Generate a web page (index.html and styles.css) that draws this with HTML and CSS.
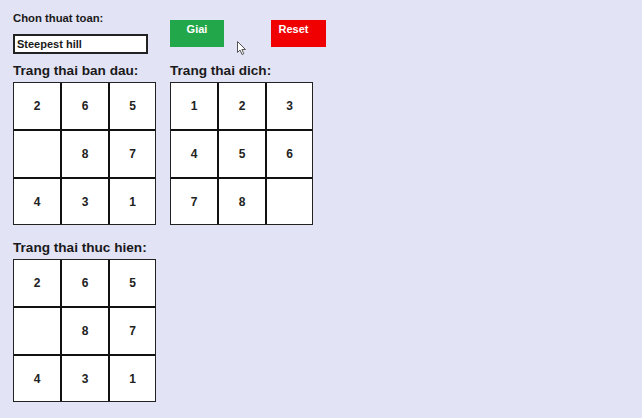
FILE: index.html
```html
<!DOCTYPE html>
<html>
<head>
<meta charset="utf-8">
<link rel="stylesheet" href="styles.css">
</head>
<body>
<div class="app">
  <div class="top">
    <div class="algo">
      <div class="label">Chon thuat toan:</div>
      <div class="select">Steepest hill</div>
    </div>
    <div class="btn green">Giai</div>
    <div class="btn red">Reset</div>
  </div>
  <div class="row">
    <div class="panel">
      <div class="heading">Trang thai ban dau:</div>
      <div class="board">
        <div class="cell">2</div><div class="cell">6</div><div class="cell">5</div>
        <div class="cell"></div><div class="cell">8</div><div class="cell">7</div>
        <div class="cell">4</div><div class="cell">3</div><div class="cell">1</div>
      </div>
    </div>
    <div class="panel">
      <div class="heading">Trang thai dich:</div>
      <div class="board">
        <div class="cell">1</div><div class="cell">2</div><div class="cell">3</div>
        <div class="cell">4</div><div class="cell">5</div><div class="cell">6</div>
        <div class="cell">7</div><div class="cell">8</div><div class="cell"></div>
      </div>
    </div>
  </div>
  <div class="row row2">
    <div class="panel">
      <div class="heading">Trang thai thuc hien:</div>
      <div class="board">
        <div class="cell">2</div><div class="cell">6</div><div class="cell">5</div>
        <div class="cell"></div><div class="cell">8</div><div class="cell">7</div>
        <div class="cell">4</div><div class="cell">3</div><div class="cell">1</div>
      </div>
    </div>
  </div>
  <svg class="cursor" width="10" height="15" viewBox="0 0 10 15">
    <path d="M0.5 0.5 L0.5 11.5 L3 9 L5 13.5 L6.8 12.7 L4.9 8.5 L8.5 8.5 Z" fill="#fff" stroke="#555" stroke-width="1"/>
  </svg>
</div>
</body>
</html>
```
FILE: styles.css
```css
html, body {
  margin: 0;
  padding: 0;
  background: #e3e3f6;
}
body {
  font-family: "Liberation Sans", Arial, sans-serif;
  color: #1a1a1a;
  width: 642px;
  height: 418px;
  overflow: hidden;
}
.app {
  position: relative;
  padding: 11px 0 0 13px;
}
.top {
  display: flex;
  align-items: flex-start;
}
.algo {
  width: 157px;
}
.label {
  font-size: 11.3px;
  font-weight: bold;
  line-height: 14px;
}
.select {
  margin-top: 9px;
  width: 129px;
  height: 16px;
  border: 2px solid #222;
  background: #fff;
  font-size: 11px;
  font-weight: bold;
  line-height: 16px;
  padding-left: 2px;
}
.btn {
  margin-top: 9px;
  width: 54px;
  height: 27px;
  box-sizing: border-box;
  color: #fff;
  font-size: 11px;
  font-weight: bold;
  text-align: center;
  padding-top: 3px;
  line-height: 13px;
}
.green {
  background: #22a84a;
}
.red {
  background: #f00000;
  margin-left: 47px;
  width: 55px;
  padding-right: 10px;
}
.row {
  display: flex;
  gap: 14px;
  margin-top: 9px;
}
.row2 {
  margin-top: 15px;
}
.heading {
  font-size: 13.6px;
  font-weight: bold;
  line-height: 16px;
  margin-bottom: 3px;
}
.board {
  display: grid;
  grid-template-columns: 46px 46px 45px;
  grid-template-rows: 46px 46px 45px;
  gap: 2px;
  border: 1px solid #222;
  background: #111;
  width: max-content;
}
.cell {
  background: #fff;
  display: flex;
  align-items: center;
  justify-content: center;
  font-size: 12px;
  font-weight: bold;
  color: #222;
}
.cursor {
  position: absolute;
  left: 237px;
  top: 41px;
}
```
